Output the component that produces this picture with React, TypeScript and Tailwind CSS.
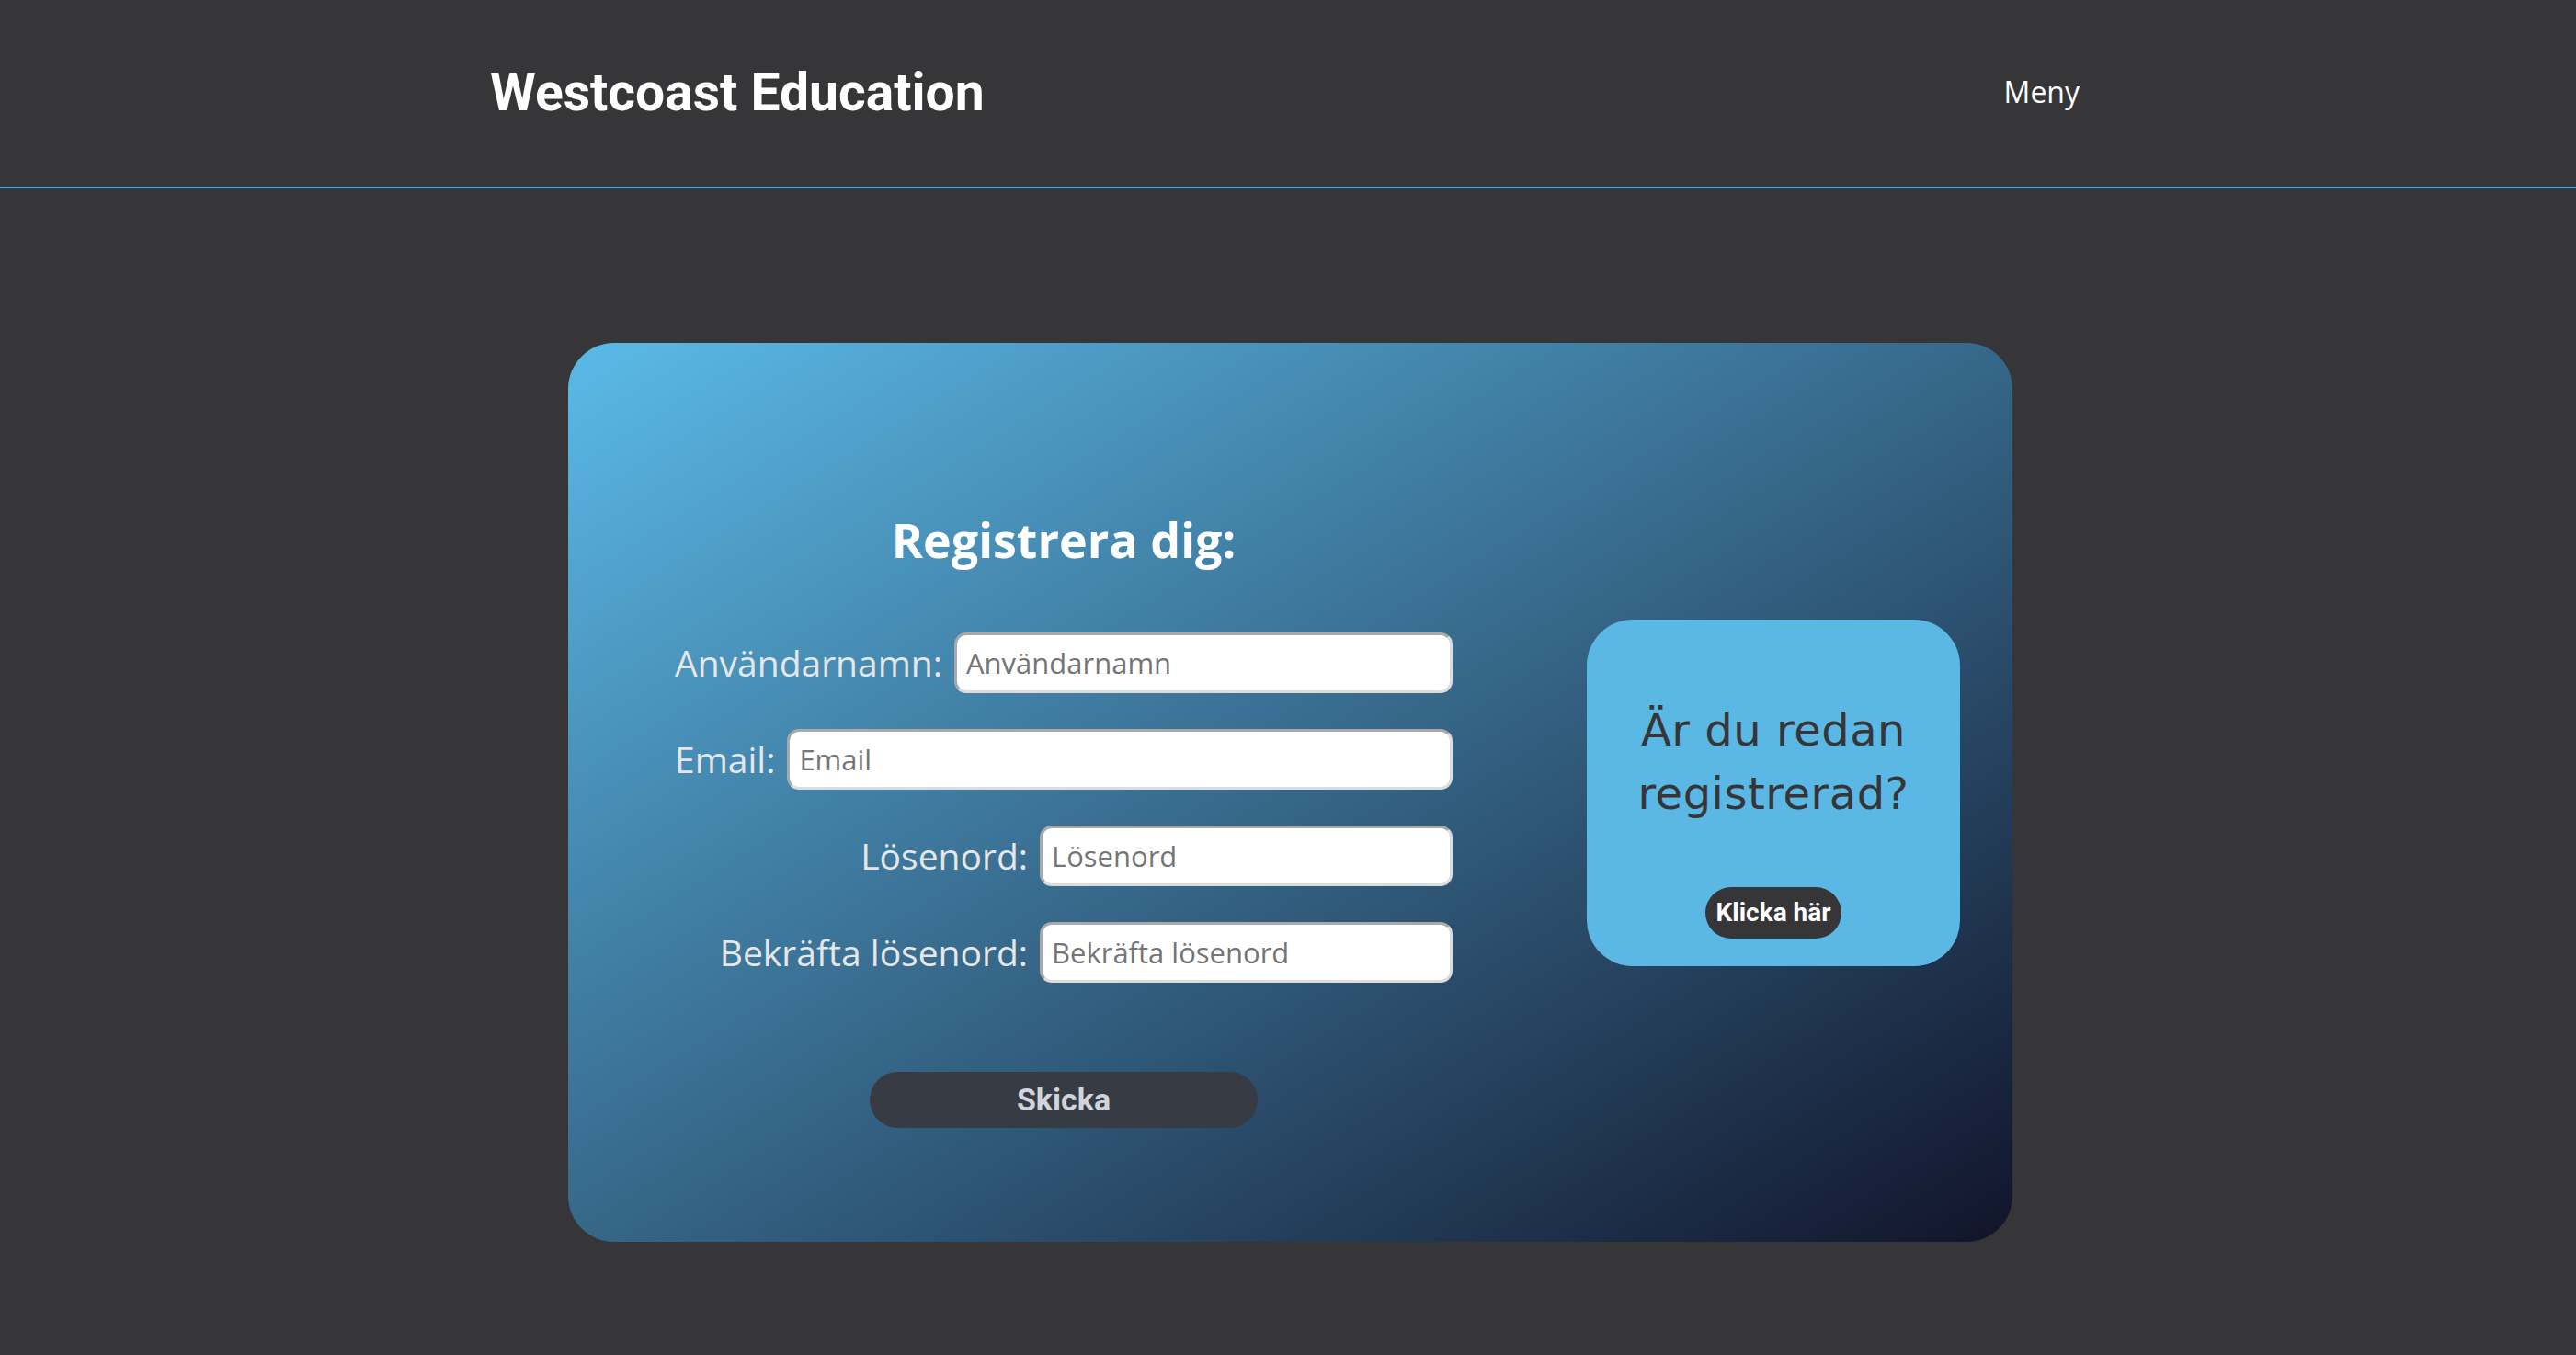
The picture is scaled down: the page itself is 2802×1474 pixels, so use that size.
import React from 'react';

const fields = [
  { label: 'Användarnamn:', placeholder: 'Användarnamn', wide: true },
  { label: 'Email:', placeholder: 'Email', wide: true },
  { label: 'Lösenord:', placeholder: 'Lösenord', wide: false },
  { label: 'Bekräfta lösenord:', placeholder: 'Bekräfta lösenord', wide: false },
];

const App = () => {
  return (
    <div className="min-h-screen bg-[#363638]">
      <header className="h-[205px] pb-[3px] border-b-2 border-[#4aa8dc] flex items-center justify-between pl-[533px] pr-[540px]">
        <h1 className="text-white font-bold text-[57px] font-['Roboto',sans-serif] leading-none">
          Westcoast Education
        </h1>
        <span className="text-white text-[32px] font-['Open_Sans',sans-serif]">Meny</span>
      </header>

      <main className="pt-[168px] pb-[123px]">
        <div className="ml-[618px] w-[1571px] h-[978px] rounded-[50px] bg-[linear-gradient(to_bottom_right,#5bbae8,#11142a)] flex items-start pl-[116px] pr-[57px]">
          <form className="w-[846px] mt-[178px] flex flex-col font-['Open_Sans',sans-serif]">
            <h2 className="text-center text-white font-bold text-[52px] leading-[72px]">Registrera dig:</h2>

            <div className="mt-[65px] flex flex-col gap-[39px]">
              {fields.map((f) => (
                <div key={f.label} className={`flex items-center gap-[13px] ${f.wide ? '' : 'justify-end'}`}>
                  <label className="text-[#e6e6e6] text-[39px] whitespace-nowrap">{f.label}</label>
                  <input
                    type="text"
                    placeholder={f.placeholder}
                    className={`h-[66px] ${f.wide ? 'flex-1' : 'w-[449px]'} bg-white rounded-[13px] border-[3px] border-t-[#a9a9a9] border-l-[#a9a9a9] border-r-[#dcdcdc] border-b-[#dcdcdc] px-[10px] text-[31px] text-[#333] placeholder:text-[#757575] outline-none`}
                  />
                </div>
              ))}
            </div>

            <button
              type="button"
              className="mt-[97px] mx-auto w-[422px] h-[61px] rounded-full bg-[#363b44] text-[#d1d5db] font-bold text-[34px] font-['Roboto',sans-serif]"
            >
              Skicka
            </button>
          </form>

          <div className="ml-auto self-center w-[406px] h-[377px] rounded-[50px] bg-[#5bb8e5] flex flex-col items-center pt-[86px]">
            <p className="text-center text-[#363638] text-[48px] leading-[69px] tracking-[0.5px] font-['DejaVu_Sans',sans-serif]">
              Är du redan
              <br />
              registrerad?
            </p>
            <button
              type="button"
              className="mt-[67px] w-[148px] h-[56px] rounded-full bg-[#363638] text-white font-bold text-[28px] font-['Roboto',sans-serif]"
            >
              Klicka här
            </button>
          </div>
        </div>
      </main>
    </div>
  );
};

export default App;
